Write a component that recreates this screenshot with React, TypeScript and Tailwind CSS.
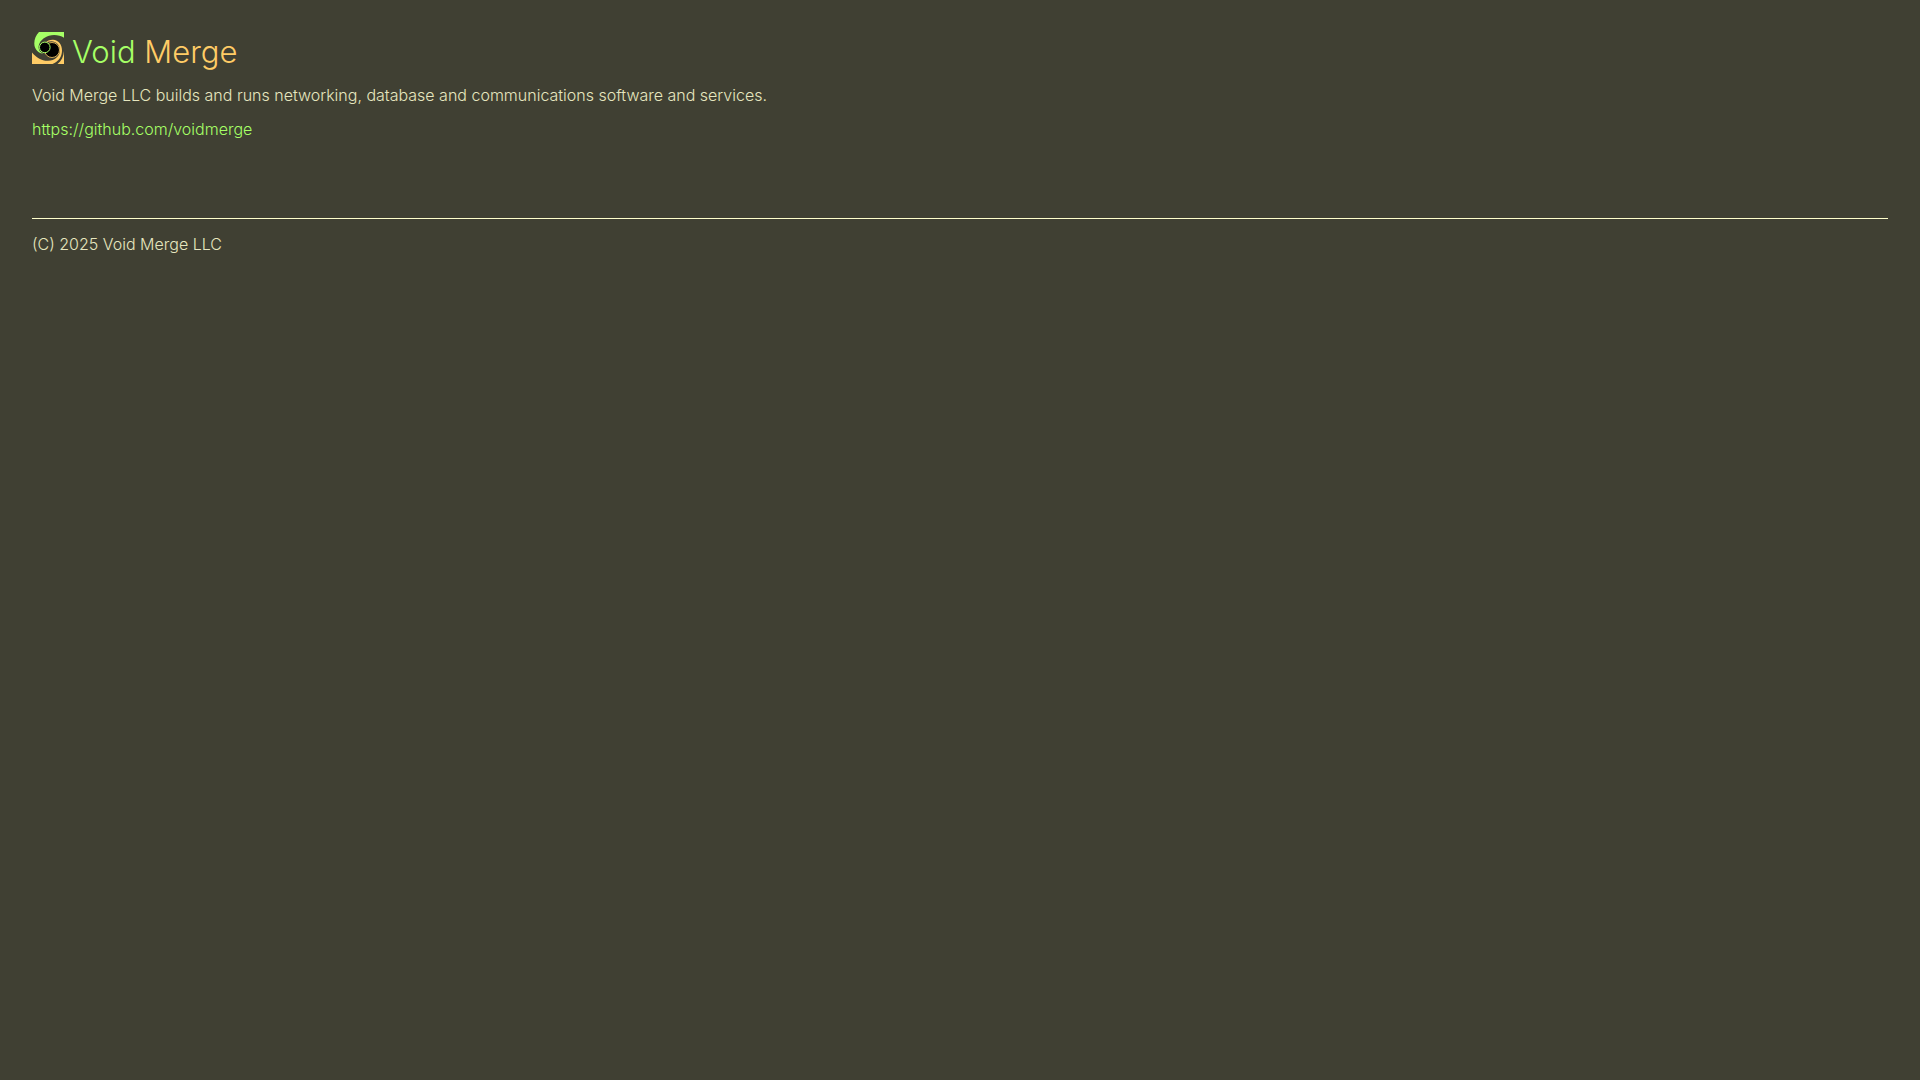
import React from 'react';

const Logo: React.FC = () => (
  <svg viewBox="0 0 32 32" className="h-8 w-8 shrink-0" aria-hidden="true">
    {/* Green arm, wraps the small hole */}
    <path
      d="M7 0H32V5.700C28 3.200 22 2.200 17 3.800C11.500 5.600 7.200 9.500 6.600 14.500C6.300 18 8.500 21 12 21.800C6.500 21.500 2.300 17.500 2.300 11.500C2.300 7 4 3 7 0Z"
      fill="#a6ff66"
    />
    {/* Orange arm, wraps the large hole */}
    <path
      d="M0 20.500C4 25.500 10 29 16 28.800C23 28.500 28 24 28 18.200C28 13 24 9.300 19.500 9.300C17 9.300 15 10 13.500 11C15 8.800 18 7.700 21 7.800C26.500 8 30 12.500 30 18.500C30 25 26.500 29.500 20.500 32H0Z"
      fill="#ffcc66"
    />
    <path d="M32 19V32H25.500C29.500 29 31.500 24.500 32 19Z" fill="#ffcc66" />
    <circle cx="20" cy="18" r="7.500" fill="#000" stroke="#ffcc66" strokeWidth="0.800" />
    <circle cx="12.800" cy="15.400" r="5.300" fill="#000" stroke="#a6ff66" strokeWidth="1" />
  </svg>
);

const App: React.FC = () => {
  return (
    <div className="min-h-screen bg-[#404033] p-8 font-['Inter','Liberation_Sans',sans-serif] text-base leading-5 font-light text-[#e6e6bf]">
      <header className="flex items-start gap-2">
        <Logo />
        <h1 className="text-[31px] leading-10 font-light">
          <span className="text-[#a6ff66]">Void</span>{' '}
          <span className="text-[#ffcc66]">Merge</span>
        </h1>
      </header>

      <main className="mt-[13px] space-y-3.5">
        <p>
          Void Merge LLC builds and runs networking, database and communications software and services.
        </p>
        <p>
          <a href="https://github.com/voidmerge" className="text-[#a6ff66]">
            https://github.com/voidmerge
          </a>
        </p>
      </main>

      <footer className="mt-[79px] border-t border-[#ffffcc] pt-[15px]">
        <p>(C) 2025 Void Merge LLC</p>
      </footer>
    </div>
  );
};

export default App;
